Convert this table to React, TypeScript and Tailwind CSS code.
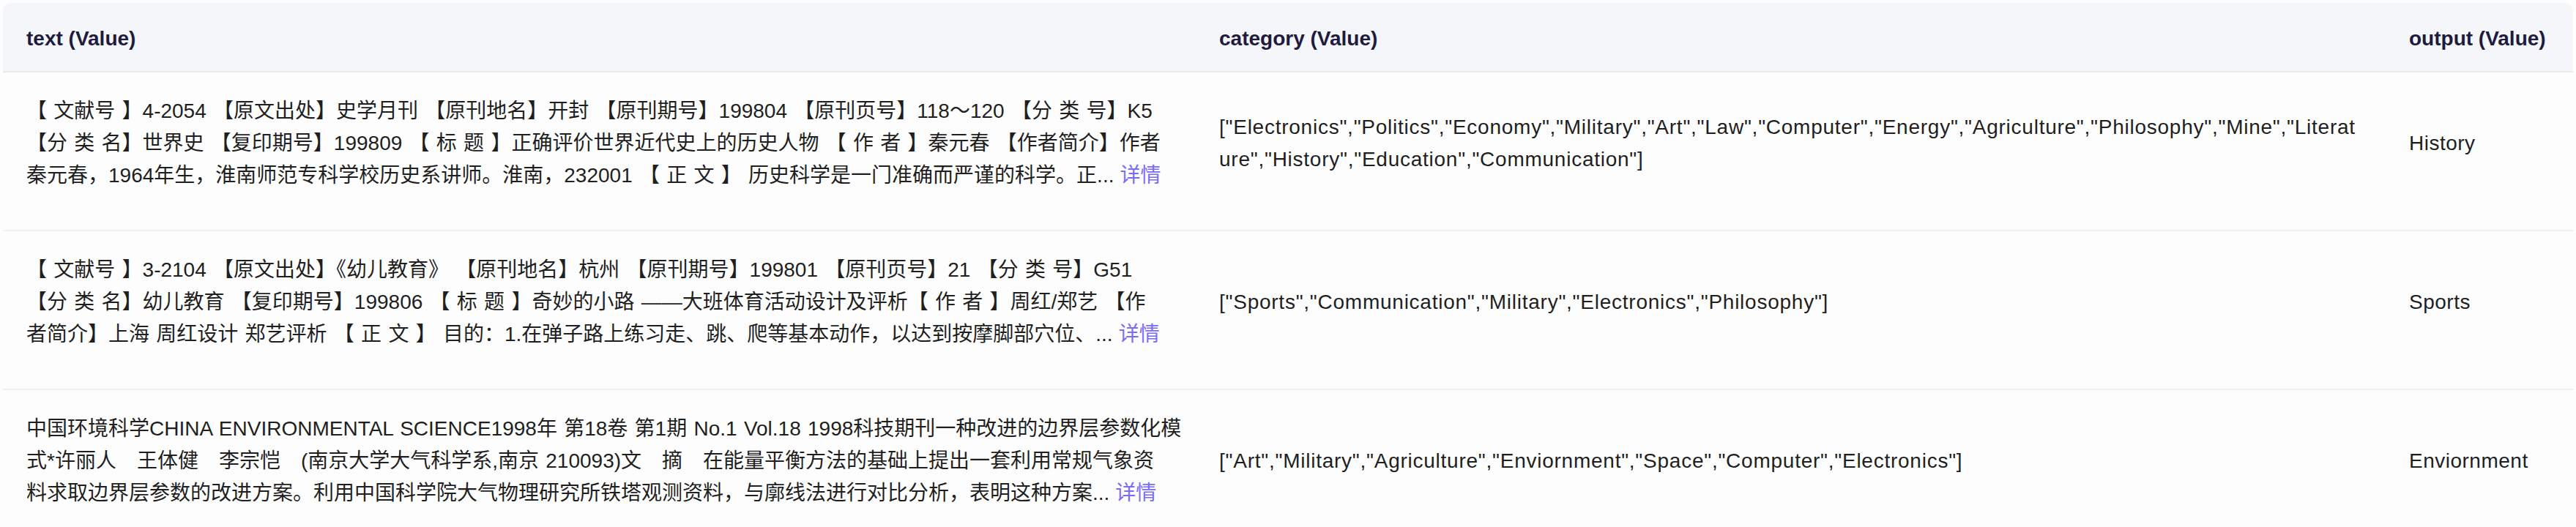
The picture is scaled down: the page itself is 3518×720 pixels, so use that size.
const rows = [
  {
    text: [
      "【 文献号 】4-2054 【原文出处】史学月刊 【原刊地名】开封 【原刊期号】199804 【原刊页号】118～120 【分 类 号】K5",
      "【分 类 名】世界史 【复印期号】199809 【 标 题 】正确评价世界近代史上的历史人物 【 作 者 】秦元春 【作者简介】作者",
      "秦元春，1964年生，淮南师范专科学校历史系讲师。淮南，232001 【 正 文 】 历史科学是一门准确而严谨的科学。正...",
    ],
    category: [
      '["Electronics","Politics","Economy","Military","Art","Law","Computer","Energy","Agriculture","Philosophy","Mine","Literat',
      'ure","History","Education","Communication"]',
    ],
    output: "History",
  },
  {
    text: [
      "【 文献号 】3-2104 【原文出处】《幼儿教育》 【原刊地名】杭州 【原刊期号】199801 【原刊页号】21 【分 类 号】G51",
      "【分 类 名】幼儿教育 【复印期号】199806 【 标 题 】奇妙的小路 ——大班体育活动设计及评析【 作 者 】周红/郑艺 【作",
      "者简介】上海 周红设计 郑艺评析 【 正 文 】 目的：1.在弹子路上练习走、跳、爬等基本动作，以达到按摩脚部穴位、...",
    ],
    category: ['["Sports","Communication","Military","Electronics","Philosophy"]'],
    output: "Sports",
  },
  {
    text: [
      "中国环境科学CHINA ENVIRONMENTAL SCIENCE1998年 第18卷 第1期 No.1 Vol.18 1998科技期刊一种改进的边界层参数化模",
      "式*许丽人\u3000王体健\u3000李宗恺\u3000(南京大学大气科学系,南京 210093)文\u3000摘\u3000在能量平衡方法的基础上提出一套利用常规气象资",
      "料求取边界层参数的改进方案。利用中国科学院大气物理研究所铁塔观测资料，与廓线法进行对比分析，表明这种方案...",
    ],
    category: ['["Art","Military","Agriculture","Enviornment","Space","Computer","Electronics"]'],
    output: "Enviornment",
  },
];

export default function App() {
  return (
    <main className="min-h-screen bg-[#fdfdfd] p-1 font-['Liberation_Sans','Noto_Sans_CJK_SC',sans-serif] text-[28px] leading-[44px] text-[#1f1f1f]">
      <table className="w-[3510px] table-fixed border-collapse">
        <colgroup>
          <col className="w-[1629px]" />
          <col className="w-[1625px]" />
          <col className="w-[256px]" />
        </colgroup>
        <thead>
          <tr className="bg-[#f5f6fa] text-[#1e1b3f]">
            <th className="rounded-tl-[12px] border-b-2 border-[#e9e9ee] px-8 pt-[27px] pb-[22px] text-left font-bold">
              text (Value)
            </th>
            <th className="border-b-2 border-[#e9e9ee] px-8 pt-[27px] pb-[22px] text-left font-bold">
              category (Value)
            </th>
            <th className="rounded-tr-[12px] border-b-2 border-[#e9e9ee] px-8 pt-[27px] pb-[22px] text-left font-bold">
              output (Value)
            </th>
          </tr>
        </thead>
        <tbody>
          {rows.map((row) => (
            <tr key={row.output} className="border-b-2 border-[#f0f0f2]">
              <td className="px-8 pt-[31px] pb-[52px] align-middle [word-spacing:1.5px]">
                {row.text.map((line, i) => (
                  <div key={i} className="whitespace-nowrap">
                    {line}
                    {i === row.text.length - 1 && (
                      <a href="#" className="ml-[8px] text-[#7a6cf6]">
                        详情
                      </a>
                    )}
                  </div>
                ))}
              </td>
              <td className="px-8 pt-[31px] pb-[52px] align-middle tracking-[0.75px]">
                {row.category.map((line, i) => (
                  <div key={i} className="whitespace-nowrap">
                    {line}
                  </div>
                ))}
              </td>
              <td className="px-8 pt-[31px] pb-[52px] align-middle tracking-[0.5px]">{row.output}</td>
            </tr>
          ))}
        </tbody>
      </table>
    </main>
  );
}
